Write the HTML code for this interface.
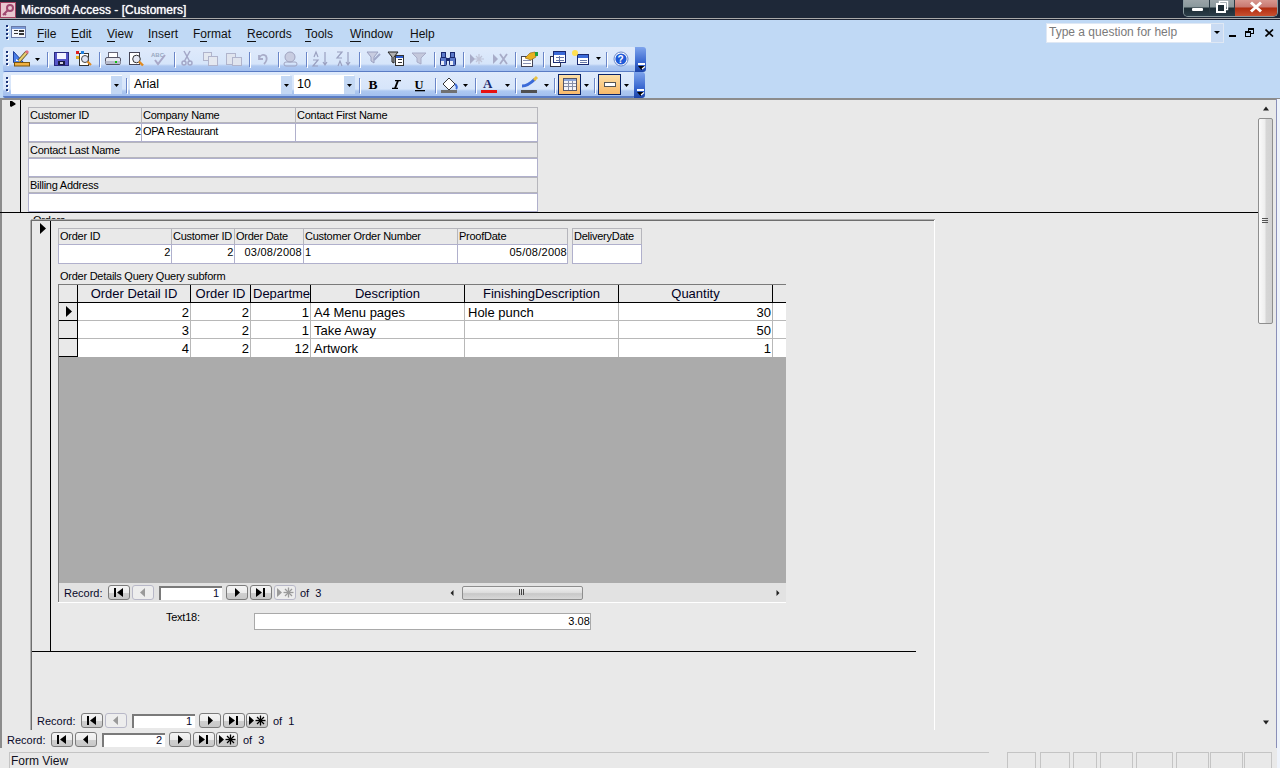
<!DOCTYPE html>
<html><head><meta charset="utf-8">
<style>
*{margin:0;padding:0;box-sizing:border-box}
html,body{width:1280px;height:768px;overflow:hidden}
body{position:relative;background:#e9e9e9;font-family:"Liberation Sans",sans-serif;color:#000}
.a{position:absolute}
.t{position:absolute;white-space:nowrap;line-height:1}
#title{left:0;top:0;width:1280px;height:18px;background:#1e2838}
#tline{left:0;top:18px;width:1280px;height:1px;background:#a9a9a9}
#tline2{left:0;top:19px;width:1280px;height:1px;background:#1c2230}
#menubar{left:0;top:20px;width:1280px;height:79px;background:#c0d9f5}
.menu{font-size:12px;color:#101010;top:28px}
.menu u{text-decoration:none;border-bottom:1px solid #101010}
.tb{background:linear-gradient(#dfeafb 0px,#d6e5fa 17px,#aec8f0 19px,#a2bfee 24px,#5a7cc4 24px);border-radius:3px 3px 2px 2px}
.cap{background:linear-gradient(#7ea4ec,#3a68d0 60%,#1c44a8);border-radius:0 3px 3px 0}
#mdi{left:0;top:99px;width:1280px;height:653px;background:#e9e9e9}
.lbl{font-size:11px;letter-spacing:-0.25px}
.ds{font-size:13px}
.hd{position:absolute;text-align:center;line-height:1;white-space:nowrap;color:#00001e}
.nv{font-size:11px;color:#08082a}
.nb{position:absolute;width:22px;height:15px;border:1px solid #7c7c7c;border-radius:3px}
.ni{position:absolute;width:63px;height:14px;background:#fff;border-top:2px solid #7a7a7a;border-left:2px solid #7a7a7a}
.fl{border:1px solid #b6b6bc}
.fv{border:1px solid #b0b0cc;background:#fff}
</style></head><body>
<!-- title bar -->
<div class="a" id="title"></div>
<div class="a" id="tline"></div>
<div class="a" id="tline2"></div>
<div class="a" style="left:2px;top:2px;width:14px;height:14px;background:#c89aa8;border:1px solid #7a3450"></div>
<div class="t" style="left:21px;top:4px;font-size:12px;color:#fff;text-shadow:0 0 1px #fff">Microsoft Access - [Customers]</div>
<div class="a" style="left:1183px;top:0;width:95px;height:17px;border:1px solid #8a9aa0;border-top:none;border-radius:0 0 5px 5px;background:#2a3a44"></div>
<div class="a" style="left:1184px;top:0;width:25px;height:16px;background:linear-gradient(#9aa4a8 0,#8a989c 7px,#1c2c34 8px,#2c3e4a 16px);border-radius:0 0 0 4px"></div>
<div class="a" style="left:1210px;top:0;width:24px;height:16px;background:linear-gradient(#9aa4a8 0,#8a989c 7px,#1c2c34 8px,#2c3e4a 16px)"></div>
<div class="a" style="left:1235px;top:0;width:42px;height:16px;background:linear-gradient(#d89890 0,#c87870 7px,#b02c10 8px,#c85030 16px);border-radius:0 0 4px 0"></div>
<div class="a" style="left:1192px;top:8px;width:11px;height:3px;background:#fff;border-radius:1px"></div>
<svg class="a" style="left:1214px;top:0" width="16" height="14"><rect x="5.5" y="1.5" width="8" height="8" fill="none" stroke="#fff" stroke-width="1.4"/><rect x="3" y="4" width="8" height="8" fill="#1c2c34" stroke="#fff" stroke-width="2"/><rect x="6" y="7" width="2" height="2" fill="#1c2c34"/></svg>
<svg class="a" style="left:1248px;top:1px" width="16" height="12"><path d="M3 1.5 L13 10.5 M13 1.5 L3 10.5" stroke="#fff" stroke-width="3"/></svg>
<!-- title icon -->
<svg class="a" style="left:0px;top:2px" width="16" height="16"><rect x="0.5" y="0.5" width="15" height="15" fill="#e8c8d0" stroke="#a04060"/><circle cx="10" cy="6" r="3" fill="none" stroke="#a04870" stroke-width="2"/><path d="M8 8 L3 13 M4 11 L6 13" stroke="#a04870" stroke-width="2"/></svg>
<!-- menubar + toolbars background -->
<div class="a" id="menubar"></div>
<svg class="a" style="left:0;top:20px" width="30" height="26"><g fill="#fff"><rect x="7" y="6" width="2" height="2"/><rect x="7" y="10" width="2" height="2"/><rect x="7" y="14" width="2" height="2"/><rect x="7" y="18" width="2" height="2"/></g><g fill="#1c3478"><rect x="6" y="5" width="2" height="2"/><rect x="6" y="9" width="2" height="2"/><rect x="6" y="13" width="2" height="2"/><rect x="6" y="17" width="2" height="2"/></g>
<rect x="11.5" y="6.5" width="14" height="11" fill="#f4f6fc" stroke="#6a7aa8"/><rect x="12" y="7" width="13" height="2" fill="#7a9ad8"/><g fill="#333"><rect x="14" y="10" width="4" height="1"/><rect x="14" y="13" width="4" height="1"/><rect x="19" y="10" width="5" height="2"/><rect x="19" y="13" width="5" height="2"/></g></svg>
<div class="t menu" style="left:37px"><u>F</u>ile</div>
<div class="t menu" style="left:71px"><u>E</u>dit</div>
<div class="t menu" style="left:107px"><u>V</u>iew</div>
<div class="t menu" style="left:148px"><u>I</u>nsert</div>
<div class="t menu" style="left:193px">F<u>o</u>rmat</div>
<div class="t menu" style="left:247px"><u>R</u>ecords</div>
<div class="t menu" style="left:305px"><u>T</u>ools</div>
<div class="t menu" style="left:350px"><u>W</u>indow</div>
<div class="t menu" style="left:410px"><u>H</u>elp</div>

<!-- help box -->
<div class="a" style="left:1046px;top:23px;width:178px;height:20px;background:#fff;border:1px solid #dfe8f4"></div>
<div class="a" style="left:1211px;top:24px;width:12px;height:18px;background:#c9dbf3"></div>
<div class="t" style="left:1049px;top:26px;font-size:12px;color:#7a7a7a">Type a question for help</div>

<!-- MDI buttons -->
<div class="a" style="left:1229px;top:35px;width:7px;height:2px;background:#000"></div>
<svg class="a" style="left:1245px;top:28px" width="9" height="9"><rect x="3.5" y="0.5" width="5" height="5" fill="none" stroke="#000"/><rect x="3" y="0" width="6" height="2" fill="#000"/><rect x="0.5" y="3.5" width="5" height="5" fill="#c0d9f5" stroke="#000"/><rect x="0" y="3" width="6" height="2" fill="#000"/></svg>
<svg class="a" style="left:1265px;top:29px" width="9" height="8"><path d="M0.5 0.5 L8 7.5 M8 0.5 L0.5 7.5" stroke="#000" stroke-width="1.7"/></svg>
<svg class="a" style="left:1214px;top:31px" width="7" height="4"><path d="M0 0 L6 0 L3 3 Z" fill="#000"/></svg>
<!-- toolbars -->
<div class="a tb" id="tb1" style="left:3px;top:47px;width:633px;height:25px"></div>
<div class="a cap" style="left:635px;top:47px;width:11px;height:25px"></div>
<div class="a tb" id="tb2" style="left:3px;top:72px;width:632px;height:26px"></div>
<div class="a cap" style="left:634px;top:72px;width:11px;height:26px"></div>
<div class="a" style="left:11px;top:75px;width:111px;height:19px;background:#fff"></div>
<div class="a" style="left:130px;top:75px;width:160px;height:19px;background:#fff"></div>
<div class="t" style="left:134px;top:78px;font-size:12.5px">Arial</div>
<div class="a" style="left:294px;top:75px;width:60px;height:19px;background:#fff"></div>
<div class="t" style="left:297px;top:78px;font-size:12.5px">10</div>

<!--TB--><svg class="a" style="left:0;top:0" width="660" height="100">
<defs>
<linearGradient id="og" x1="0" y1="0" x2="0" y2="1"><stop offset="0" stop-color="#fde0a8"/><stop offset="1" stop-color="#f8b868"/></linearGradient>
<linearGradient id="gb" x1="0" y1="0" x2="0" y2="1"><stop offset="0" stop-color="#6f9ff0"/><stop offset="1" stop-color="#1f48b8"/></linearGradient>
</defs>
<!-- grips -->
<g fill="#fff"><rect x="7" y="52" width="2" height="2"/><rect x="7" y="56" width="2" height="2"/><rect x="7" y="60" width="2" height="2"/><rect x="7" y="64" width="2" height="2"/>
<rect x="7" y="78" width="2" height="2"/><rect x="7" y="82" width="2" height="2"/><rect x="7" y="86" width="2" height="2"/><rect x="7" y="90" width="2" height="2"/></g>
<g fill="#1c3478"><rect x="6" y="51" width="2" height="2"/><rect x="6" y="55" width="2" height="2"/><rect x="6" y="59" width="2" height="2"/><rect x="6" y="63" width="2" height="2"/>
<rect x="6" y="77" width="2" height="2"/><rect x="6" y="81" width="2" height="2"/><rect x="6" y="85" width="2" height="2"/><rect x="6" y="89" width="2" height="2"/></g>
<!-- separators tb1 -->
<g fill="#6a86c8">
<rect x="47" y="52" width="1" height="15"/><rect x="99" y="52" width="1" height="15"/><rect x="174" y="52" width="1" height="15"/>
<rect x="249" y="52" width="1" height="15"/><rect x="278" y="52" width="1" height="15"/><rect x="306" y="52" width="1" height="15"/>
<rect x="359" y="52" width="1" height="15"/><rect x="434" y="52" width="1" height="15"/><rect x="463" y="52" width="1" height="15"/>
<rect x="515" y="52" width="1" height="15"/><rect x="543" y="52" width="1" height="15"/><rect x="606" y="52" width="1" height="15"/>
<rect x="126" y="78" width="1" height="15"/><rect x="359" y="78" width="1" height="15"/><rect x="435" y="78" width="1" height="15"/>
<rect x="475" y="78" width="1" height="15"/><rect x="515" y="78" width="1" height="15"/><rect x="554" y="78" width="1" height="15"/><rect x="594" y="78" width="1" height="15"/>
</g>
<g fill="#fff">
<rect x="48" y="53" width="1" height="15"/><rect x="100" y="53" width="1" height="15"/><rect x="175" y="53" width="1" height="15"/>
<rect x="250" y="53" width="1" height="15"/><rect x="279" y="53" width="1" height="15"/><rect x="307" y="53" width="1" height="15"/>
<rect x="360" y="53" width="1" height="15"/><rect x="435" y="53" width="1" height="15"/><rect x="464" y="53" width="1" height="15"/>
<rect x="516" y="53" width="1" height="15"/><rect x="544" y="53" width="1" height="15"/><rect x="607" y="53" width="1" height="15"/>
<rect x="127" y="79" width="1" height="15"/><rect x="360" y="79" width="1" height="15"/><rect x="436" y="79" width="1" height="15"/>
<rect x="476" y="79" width="1" height="15"/><rect x="516" y="79" width="1" height="15"/><rect x="555" y="79" width="1" height="15"/><rect x="595" y="79" width="1" height="15"/>
</g>
<!-- design view -->
<path d="M13.5 51.5 L13.5 62.5 L23.5 62.5 Z" fill="#4a7ee8" stroke="#1d3f9b"/>
<path d="M16 59 L16 61 L19 61 Z" fill="#fff"/>
<path d="M19 61 L27 52" stroke="#5a4a20" stroke-width="3.6"/>
<path d="M19 61 L27 52" stroke="#e8d070" stroke-width="2.2"/>
<path d="M26 53 L28 51" stroke="#e07080" stroke-width="3"/>
<rect x="14.5" y="62.5" width="15" height="3.5" fill="#f0b040" stroke="#7a5510"/>
<path d="M35 58 L40 58 L37.5 61 Z" fill="#000"/>
<!-- save -->
<rect x="54.5" y="52.5" width="14" height="13" fill="#5656c8" stroke="#2a2a80"/>
<rect x="57" y="53" width="9" height="6" fill="#f4f4ff"/>
<rect x="58" y="61" width="7" height="4" fill="#1a1a40"/>
<rect x="60" y="62" width="3" height="2" fill="#d0d0e0"/>
<!-- file search -->
<rect x="79.5" y="53.5" width="9" height="12" fill="#fff" stroke="#333"/>
<rect x="76" y="51" width="3" height="3" fill="#e02020"/><rect x="81" y="51" width="3" height="3" fill="#2080e0"/><rect x="76" y="56" width="3" height="3" fill="#e0b020"/>
<circle cx="85" cy="59" r="3.5" fill="#dfe4f4" stroke="#444"/>
<path d="M87.5 61.5 L91 65" stroke="#e08a20" stroke-width="2.2"/>
<!-- print -->
<rect x="108.5" y="52.5" width="9" height="5" fill="#fff" stroke="#667"/>
<rect x="105.5" y="57.5" width="15" height="7" rx="1.5" fill="#e6e8f0" stroke="#556"/>
<rect x="105.5" y="61" width="15" height="3" fill="#b8bccc"/>
<rect x="115" y="61" width="2" height="2" fill="#10c010"/>
<!-- print preview -->
<rect x="129.5" y="52.5" width="10" height="12" fill="#fff" stroke="#445"/>
<circle cx="136.5" cy="59" r="3.8" fill="#e4e8f4" stroke="#333"/>
<path d="M139 61.5 L143 65.5" stroke="#e08a20" stroke-width="2.4"/>
<!-- spelling (disabled) -->
<text x="151" y="57" font-family="Liberation Sans" font-size="6" font-weight="bold" fill="#98a8c0">ABC</text>
<path d="M155 60 L158 64 L165 55" stroke="#a8a8c8" stroke-width="2" fill="none"/>
<!-- cut disabled -->
<g stroke="#a4a8c8" stroke-width="1.5" fill="none"><path d="M184 51 L190 62"/><path d="M190 51 L184 62"/><circle cx="184" cy="63" r="2"/><circle cx="190" cy="63" r="2"/></g>
<!-- copy disabled -->
<g stroke="#b0b4cc" fill="#e4e8f0"><rect x="203.5" y="52.5" width="8" height="8"/><rect x="208.5" y="56.5" width="9" height="9"/></g>
<!-- paste disabled -->
<g stroke="#b0b4cc" fill="#e0e4ee"><rect x="226.5" y="53.5" width="9" height="11"/><rect x="232.5" y="57.5" width="9" height="8"/></g>
<!-- undo disabled -->
<path d="M259 55 L259 59 L263 59 M259 58 Q262 53 266 56 Q268 60 264 64" stroke="#a8acc8" stroke-width="1.8" fill="none"/>
<!-- office links disabled -->
<circle cx="290" cy="57" r="5" fill="#c8cce0" stroke="#a0a4c0"/><rect x="284" y="62" width="13" height="4" rx="2" fill="none" stroke="#a0a4c0"/>
<!-- sort asc/desc disabled -->
<g fill="none" stroke="#9aa0c0" stroke-width="1.2"><path d="M314 57 L316 52 L318 57 M313 60 L318 60 L313 66 L318 66"/><path d="M325 52 L325 65 M323 62 L325 65 L327 62"/>
<path d="M337 52 L342 52 L337 58 L342 58 M338 66 L340 61 L342 66"/><path d="M348 52 L348 65 M346 62 L348 65 L350 62"/></g>
<!-- filter by selection disabled -->
<path d="M367 52 L378 52 L374 57 L374 63 L371 61 L371 57 Z" fill="#c8cce0" stroke="#9aa0c0"/>
<path d="M374 60 L380 54" stroke="#a0a8c8" stroke-width="2"/>
<!-- filter by form -->
<path d="M388 52 L398 52 L394 57 L394 63 L392 62 L392 57 Z" fill="#b0b0b0" stroke="#222"/>
<rect x="395.5" y="55.5" width="8" height="10" fill="#fff" stroke="#333"/><rect x="396" y="56" width="7" height="2" fill="#2a5cd0"/>
<rect x="398" y="59" width="4" height="1" fill="#333"/><rect x="398" y="62" width="4" height="1" fill="#333"/>
<!-- apply filter disabled -->
<path d="M412 53 L426 53 L421 58 L421 64 L417 62 L417 58 Z" fill="#c4c8dc" stroke="#a8acc8"/>
<!-- binoculars -->
<g fill="#5a78c8" stroke="#1a2a70" stroke-width="1"><rect x="440.5" y="57.5" width="6" height="8" rx="1"/><rect x="449.5" y="57.5" width="6" height="8" rx="1"/><rect x="441.5" y="52.5" width="4" height="5"/><rect x="450.5" y="52.5" width="4" height="5"/></g><rect x="446" y="58" width="4" height="3" fill="#1a2a70"/>
<g fill="#e8ecf8"><rect x="441" y="61" width="3" height="4"/><rect x="450" y="61" width="3" height="4"/></g>
<!-- new / delete record disabled -->
<path d="M470 54 L470 64 L475 59 Z" fill="#a8acc8"/><g stroke="#c0c4d8" stroke-width="1.2"><path d="M479 54 L479 64 M474 59 L484 59 M476 56 L482 62 M482 56 L476 62"/></g>
<path d="M493 54 L493 64 L498 59 Z" fill="#a8acc8"/><g stroke="#a8acc8" stroke-width="1.8"><path d="M500 54 L507 64 M507 54 L500 64"/></g>
<!-- properties -->
<rect x="521.5" y="56.5" width="11" height="10" fill="#fff" stroke="#445"/><rect x="523" y="60" width="8" height="1" fill="#8890b0"/><rect x="523" y="63" width="8" height="1" fill="#8890b0"/>
<path d="M525 58 L530 53 L535 52 L536 57 L531 60 Z" fill="#e8b020" stroke="#8a6010" stroke-width="0.6"/>
<rect x="535" y="52" width="3" height="4" fill="#20a040"/>
<!-- database window -->
<rect x="550.5" y="56.5" width="10" height="10" fill="#fff" stroke="#334"/>
<rect x="553.5" y="51.5" width="12" height="11" fill="#fff" stroke="#1a2a70"/><rect x="554" y="52" width="11" height="3" fill="#3a6ad8"/>
<g fill="#6878a8"><rect x="556" y="57" width="8" height="1"/><rect x="556" y="60" width="8" height="1"/><rect x="559" y="56" width="1" height="6"/></g>
<!-- new object -->
<rect x="577.5" y="54.5" width="11" height="10" fill="#fff" stroke="#1a2a70"/><rect x="578" y="55" width="10" height="3" fill="#3a6ad8"/>
<g fill="#6878a8"><rect x="580" y="60" width="7" height="1"/><rect x="580" y="62" width="7" height="1"/></g>
<circle cx="575" cy="53" r="3" fill="#ffe050"/>
<path d="M596 57 L601 57 L598.5 60 Z" fill="#000"/>
<!-- help -->
<circle cx="621" cy="59" r="7" fill="#fff" stroke="#6a88c8"/>
<circle cx="621" cy="59" r="5.6" fill="#1f5ad8"/>
<text x="617.5" y="63" font-family="Liberation Sans" font-size="10" font-weight="bold" fill="#fff">?</text>
<!-- end caps -->
<rect x="638" y="63" width="7" height="2" fill="#fff"/><path d="M638 66 L645 66 L641.5 70 Z" fill="#000"/><path d="M642 69 L645 66.5" stroke="#fff" stroke-width="1.2"/>
<rect x="637" y="89" width="7" height="2" fill="#fff"/><path d="M637 92 L644 92 L640.5 96 Z" fill="#000"/><path d="M641 95 L644 92.5" stroke="#fff" stroke-width="1.2"/>

<!-- toolbar 2 -->
<rect x="111" y="76" width="11" height="18" fill="#c4d8f4"/>
<path d="M114 84 L119 84 L116.5 87 Z" fill="#000"/>
<rect x="281" y="76" width="11" height="18" fill="#c4d8f4"/>
<path d="M284 84 L289 84 L286.5 87 Z" fill="#000"/>
<rect x="344" y="76" width="11" height="18" fill="#c4d8f4"/>
<path d="M347 84 L352 84 L349.5 87 Z" fill="#000"/>
<!-- B I U -->
<text x="368.5" y="89" font-family="Liberation Serif" font-size="13.5" font-weight="bold" fill="#000">B</text>
<path d="M395 80.6 L401 80.6 M392 88.4 L398 88.4" stroke="#000" stroke-width="1.2" fill="none"/>
<path d="M398 80.5 L395 88.5" stroke="#000" stroke-width="1.9"/>
<text x="414.5" y="89" font-family="Liberation Serif" font-size="12.5" font-weight="bold" fill="#000">U</text>
<rect x="415" y="90" width="10" height="1.3" fill="#000"/>
<!-- fill color -->
<path d="M443 84 L449 78 L455 84 L449 90 Z" fill="#fff" stroke="#333"/>
<path d="M455 84 Q458 87 456 89" stroke="#3a6ad8" stroke-width="2" fill="none"/>
<rect x="441" y="90" width="16" height="3" fill="#707070"/>
<path d="M463 84 L468 84 L465.5 87 Z" fill="#000"/>
<!-- font color -->
<text x="483" y="88" font-family="Liberation Serif" font-size="13" font-weight="bold" fill="#1a2a70">A</text>
<rect x="481" y="90" width="16" height="3" fill="#e81010"/>
<path d="M505 84 L510 84 L507.5 87 Z" fill="#000"/>
<!-- line color -->
<path d="M522 86 Q528 86 535 79" stroke="#3a6ad8" stroke-width="3" fill="none"/>
<path d="M534 80 L537 77" stroke="#e8c040" stroke-width="3"/>
<rect x="521" y="90" width="16" height="3" fill="#505050"/>
<path d="M544 84 L549 84 L546.5 87 Z" fill="#000"/>
<!-- special effect (highlighted) -->
<rect x="558.5" y="74.5" width="22" height="20" fill="url(#og)" stroke="#0a246a"/>
<rect x="563.5" y="78.5" width="13" height="12" fill="#f4f4f8" stroke="#556"/>
<rect x="564" y="79" width="12" height="2" fill="#8aa4d8"/>
<g fill="#8890a8"><rect x="564" y="83" width="12" height="1"/><rect x="564" y="86" width="12" height="1"/><rect x="568" y="81" width="1" height="9"/><rect x="572" y="81" width="1" height="9"/></g>
<path d="M584 84 L589 84 L586.5 87 Z" fill="#000"/>
<!-- border (highlighted) -->
<rect x="598.5" y="74.5" width="22" height="20" fill="url(#og)" stroke="#0a246a"/>
<rect x="604.5" y="82.5" width="11" height="4" fill="#fff" stroke="#555"/>
<path d="M624 84 L629 84 L626.5 87 Z" fill="#000"/>
</svg>
<!--/TB-->
<!-- MDI area -->
<div class="a" id="mdi"></div>

<!-- MDI child border -->
<div class="a" style="left:0;top:98px;width:1280px;height:2px;background:#8c8c8c"></div>
<div class="a" style="left:0;top:100px;width:2px;height:648px;background:#8c8c8c"></div>
<div class="a" style="left:1276px;top:99px;width:1px;height:649px;background:#8a8fb8"></div>
<div class="a" style="left:1277px;top:99px;width:3px;height:669px;background:#eef3fb"></div>
<!-- record selector column (main form) -->
<div class="a" style="left:20px;top:100px;width:1px;height:112px;background:#000"></div>
<svg class="a" style="left:10px;top:101px" width="6" height="7"><path d="M0 0 L0 5 L1 6 L5.5 3.5 L5.5 2.5 L2 0 Z" fill="#000"/></svg>
<!-- header fields -->
<div class="a fl" style="left:28px;top:107px;width:114px;height:16px"></div>
<div class="a fl" style="left:141px;top:107px;width:155px;height:16px"></div>
<div class="a fl" style="left:295px;top:107px;width:243px;height:16px"></div>
<div class="a fv" style="left:28px;top:123px;width:114px;height:19px"></div>
<div class="a fv" style="left:141px;top:123px;width:155px;height:19px"></div>
<div class="a fv" style="left:295px;top:123px;width:243px;height:19px"></div>
<div class="a fl" style="left:28px;top:142px;width:510px;height:16px"></div>
<div class="a fv" style="left:28px;top:158px;width:510px;height:19px"></div>
<div class="a fl" style="left:28px;top:177px;width:510px;height:16px"></div>
<div class="a fv" style="left:28px;top:193px;width:510px;height:19px"></div>
<div class="t lbl" style="left:30px;top:109.5px">Customer ID</div>
<div class="t lbl" style="left:143px;top:109.5px">Company Name</div>
<div class="t lbl" style="left:297px;top:109.5px">Contact First Name</div>
<div class="t lbl" style="left:135px;top:125.5px">2</div>
<div class="t lbl" style="left:143px;top:125.5px">OPA Restaurant</div>
<div class="t lbl" style="left:30px;top:144.5px">Contact Last Name</div>
<div class="t lbl" style="left:30px;top:179.5px">Billing Address</div>
<!-- section divider -->
<div class="a" style="left:0;top:212px;width:1258px;height:1px;background:#000"></div>
<!-- Orders label (clipped) -->
<div class="a" style="left:33px;top:213px;width:40px;height:6px;overflow:hidden"><div class="t lbl" style="left:0;top:1.5px">Orders</div></div>

<!-- Orders subform -->
<div class="a" style="left:31px;top:220px;width:904px;height:1px;background:#6e6e6e"></div>
<div class="a" style="left:31px;top:219px;width:904px;height:1px;background:#b0b0b0"></div>
<div class="a" style="left:31px;top:220px;width:1px;height:510px;background:#6e6e6e"></div>
<div class="a" style="left:30px;top:220px;width:1px;height:510px;background:#b0b0b0"></div>
<div class="a" style="left:934px;top:220px;width:1px;height:510px;background:#ffffff"></div>
<div class="a" style="left:50px;top:221px;width:1px;height:430px;background:#000"></div>
<div class="a" style="left:32px;top:651px;width:884px;height:1px;background:#000"></div>
<svg class="a" style="left:40px;top:223px" width="8" height="12"><path d="M0 0 L6 5.5 L0 11 Z" fill="#000"/></svg>

<!-- Orders fields -->
<div class="a fl" style="left:58px;top:228px;width:114px;height:17px"></div>
<div class="a fl" style="left:171px;top:228px;width:64px;height:17px"></div>
<div class="a fl" style="left:234px;top:228px;width:70px;height:17px"></div>
<div class="a fl" style="left:303px;top:228px;width:155px;height:17px"></div>
<div class="a fl" style="left:457px;top:228px;width:111px;height:17px"></div>
<div class="a fl" style="left:572px;top:228px;width:70px;height:17px"></div>
<div class="a fv" style="left:58px;top:244px;width:114px;height:20px"></div>
<div class="a fv" style="left:171px;top:244px;width:64px;height:20px"></div>
<div class="a fv" style="left:234px;top:244px;width:70px;height:20px"></div>
<div class="a fv" style="left:303px;top:244px;width:155px;height:20px"></div>
<div class="a fv" style="left:457px;top:244px;width:111px;height:20px"></div>
<div class="a fv" style="left:572px;top:244px;width:70px;height:20px"></div>
<div class="t lbl" style="left:60px;top:230.5px">Order ID</div>
<div class="t lbl" style="left:173px;top:230.5px">Customer ID</div>
<div class="t lbl" style="left:236px;top:230.5px">Order Date</div>
<div class="t lbl" style="left:305px;top:230.5px">Customer Order Number</div>
<div class="t lbl" style="left:459px;top:230.5px">ProofDate</div>
<div class="t lbl" style="left:574px;top:230.5px">DeliveryDate</div>
<div class="t lbl r" style="right:1110px;top:246.5px">2</div>
<div class="t lbl r" style="right:1047px;top:246.5px">2</div>
<div class="t lbl r" style="right:978px;top:246.5px;letter-spacing:0.25px">03/08/2008</div>
<div class="t lbl" style="left:305px;top:246.5px">1</div>
<div class="t lbl r" style="right:713px;top:246.5px;letter-spacing:0.25px">05/08/2008</div>
<div class="t lbl" style="left:60px;top:270.5px">Order Details Query Query subform</div>

<!-- datasheet -->
<div class="a" style="left:58px;top:284px;width:728px;height:318px;background:#ababab"></div>
<div class="a" style="left:58px;top:284px;width:728px;height:1px;background:#7a7a7a"></div>
<div class="a" style="left:58px;top:284px;width:1px;height:318px;background:#7a7a7a"></div>
<div class="a" style="left:59px;top:285px;width:727px;height:18px;background:#e9e9e9"></div>
<div class="a" style="left:59px;top:303px;width:18px;height:54px;background:#e9e9e9"></div>
<div class="a" style="left:78px;top:303px;width:708px;height:54px;background:#fff"></div>
<div class="a" style="left:59px;top:583px;width:727px;height:19px;background:#e2e2e2"></div>
<div class="a" style="left:58px;top:602px;width:728px;height:1px;background:#fff"></div>
<!-- grid lines -->
<div class="a" style="left:59px;top:302px;width:727px;height:1px;background:#000"></div>
<div class="a" style="left:59px;top:320px;width:18px;height:1px;background:#000"></div>
<div class="a" style="left:59px;top:338px;width:18px;height:1px;background:#000"></div>
<div class="a" style="left:59px;top:356px;width:18px;height:1px;background:#000"></div>
<div class="a" style="left:78px;top:320px;width:708px;height:1px;background:#b8b8b8"></div>
<div class="a" style="left:78px;top:338px;width:708px;height:1px;background:#b8b8b8"></div>
<div class="a" style="left:77px;top:285px;width:1px;height:72px;background:#000"></div>
<div class="a" style="left:190px;top:285px;width:1px;height:17px;background:#000"></div>
<div class="a" style="left:250px;top:285px;width:1px;height:17px;background:#000"></div>
<div class="a" style="left:310px;top:285px;width:1px;height:17px;background:#000"></div>
<div class="a" style="left:464px;top:285px;width:1px;height:17px;background:#000"></div>
<div class="a" style="left:618px;top:285px;width:1px;height:17px;background:#000"></div>
<div class="a" style="left:772px;top:285px;width:1px;height:17px;background:#000"></div>
<div class="a" style="left:190px;top:303px;width:1px;height:54px;background:#b8b8b8"></div>
<div class="a" style="left:250px;top:303px;width:1px;height:54px;background:#b8b8b8"></div>
<div class="a" style="left:310px;top:303px;width:1px;height:54px;background:#b8b8b8"></div>
<div class="a" style="left:464px;top:303px;width:1px;height:54px;background:#b8b8b8"></div>
<div class="a" style="left:618px;top:303px;width:1px;height:54px;background:#b8b8b8"></div>
<div class="a" style="left:772px;top:303px;width:1px;height:54px;background:#b8b8b8"></div>
<svg class="a" style="left:66px;top:306px" width="7" height="11"><path d="M0 0 L6 5.5 L0 11 Z" fill="#000"/></svg>
<div class="a ds hd" style="left:78px;top:286.5px;width:112px">Order Detail ID</div>
<div class="a ds hd" style="left:191px;top:286.5px;width:59px">Order ID</div>
<div class="a ds hd" style="left:251px;top:286.5px;width:59px;overflow:hidden;text-align:left;padding-left:2px">Departme</div>
<div class="a ds hd" style="left:311px;top:286.5px;width:153px">Description</div>
<div class="a ds hd" style="left:465px;top:286.5px;width:153px">FinishingDescription</div>
<div class="a ds hd" style="left:619px;top:286.5px;width:153px">Quantity</div>
<div class="t ds" style="right:1091px;top:306px">2</div>
<div class="t ds" style="right:1091px;top:324px">3</div>
<div class="t ds" style="right:1091px;top:342px">4</div>
<div class="t ds" style="right:1031px;top:306px">2</div>
<div class="t ds" style="right:1031px;top:324px">2</div>
<div class="t ds" style="right:1031px;top:342px">2</div>
<div class="t ds" style="right:971px;top:306px">1</div>
<div class="t ds" style="right:971px;top:324px">1</div>
<div class="t ds" style="right:971px;top:342px">12</div>
<div class="t ds" style="left:314px;top:306px">A4 Menu pages</div>
<div class="t ds" style="left:314px;top:324px">Take Away</div>
<div class="t ds" style="left:314px;top:342px">Artwork</div>
<div class="t ds" style="left:468px;top:306px">Hole punch</div>
<div class="t ds" style="right:509px;top:306px">30</div>
<div class="t ds" style="right:509px;top:324px">50</div>
<div class="t ds" style="right:509px;top:342px">1</div>

<!-- text18 -->
<div class="t lbl" style="left:166px;top:611.5px">Text18:</div>
<div class="a" style="left:254px;top:613px;width:337px;height:17px;background:#fff;border:1px solid #a9a9a9"></div>
<div class="t lbl" style="right:690px;top:615.5px;letter-spacing:0.1px">3.08</div>
<!-- hscroll -->
<svg class="a" style="left:449px;top:589px" width="6" height="8"><path d="M4.5 1 L4.5 7 L1.5 4 Z" fill="#222"/></svg>
<div class="a" style="left:462px;top:586px;width:121px;height:14px;border:1px solid #8e8e8e;border-radius:2px;background:linear-gradient(#f0f0f0,#dcdcdc 50%,#c8c8c8 55%,#d8d8d8)"></div>
<div class="a" style="left:519px;top:589px;width:1px;height:6px;background:#444"></div>
<div class="a" style="left:521px;top:589px;width:1px;height:6px;background:#444"></div>
<div class="a" style="left:523px;top:589px;width:1px;height:6px;background:#444"></div>
<svg class="a" style="left:775px;top:589px" width="6" height="8"><path d="M1.5 1 L1.5 7 L4.5 4 Z" fill="#222"/></svg>
<!-- vscroll -->
<svg class="a" style="left:1263px;top:106px" width="7" height="5"><path d="M0 4.5 L6 4.5 L3 0.5 Z" fill="#222"/></svg>
<div class="a" style="left:1258px;top:118px;width:15px;height:206px;border:1px solid #8e8e8e;border-radius:2px;background:linear-gradient(90deg,#fafafa,#eeeeee 45%,#d6d6d6 55%,#d2d2d2)"></div>
<div class="a" style="left:1262px;top:218px;width:6px;height:1px;background:#555"></div>
<div class="a" style="left:1262px;top:220px;width:6px;height:1px;background:#555"></div>
<div class="a" style="left:1262px;top:222px;width:6px;height:1px;background:#555"></div>
<svg class="a" style="left:1263px;top:720px" width="7" height="5"><path d="M0 0.5 L6 0.5 L3 4.5 Z" fill="#222"/></svg>
<!-- status bar -->
<div class="a" style="left:9px;top:752px;width:980px;height:1px;background:#c4c4c4"></div>
<div class="a" style="left:9px;top:752px;width:1px;height:16px;background:#c4c4c4"></div>
<div class="a" style="left:1007px;top:752px;width:29px;height:16px;border-top:1px solid #c4c4c4;border-left:1px solid #c4c4c4;border-right:1px solid #c4c4c4"></div>
<div class="a" style="left:1040px;top:752px;width:30px;height:16px;border-top:1px solid #c4c4c4;border-left:1px solid #c4c4c4;border-right:1px solid #c4c4c4"></div>
<div class="a" style="left:1073px;top:752px;width:24px;height:16px;border-top:1px solid #c4c4c4;border-left:1px solid #c4c4c4;border-right:1px solid #c4c4c4"></div>
<div class="a" style="left:1100px;top:752px;width:33px;height:16px;border-top:1px solid #c4c4c4;border-left:1px solid #c4c4c4;border-right:1px solid #c4c4c4"></div>
<div class="a" style="left:1136px;top:752px;width:37px;height:16px;border-top:1px solid #c4c4c4;border-left:1px solid #c4c4c4;border-right:1px solid #c4c4c4"></div>
<div class="a" style="left:1176px;top:752px;width:33px;height:16px;border-top:1px solid #c4c4c4;border-left:1px solid #c4c4c4;border-right:1px solid #c4c4c4"></div>
<div class="a" style="left:1210px;top:752px;width:33px;height:16px;border-top:1px solid #c4c4c4;border-left:1px solid #c4c4c4;border-right:1px solid #c4c4c4"></div>
<div class="a" style="left:1244px;top:752px;width:28px;height:16px;border-top:1px solid #c4c4c4;border-left:1px solid #c4c4c4;border-right:1px solid #c4c4c4"></div>
<div class="t" style="left:11px;top:755px;font-size:12px;color:#101020">Form View</div>
<!-- navs -->
<!--NAV--><div class="t nv" style="left:64px;top:588px">Record:</div><div class="a nb" style="left:108px;top:585px;border-color:#7c7c7c;background:linear-gradient(#f4f4f4 0%,#ececec 50%,#cfcfcf 55%,#c8c8c8 100%)"></div><svg class="a" style="left:108px;top:585px" width="22" height="15"><rect x="6" y="3" width="2" height="9" fill="#000"/><path d="M15 3 L15 12 L9 7.5 Z" fill="#000"/></svg><div class="a nb" style="left:132px;top:585px;border-color:#b8b8c8;background:#ededed"></div><svg class="a" style="left:132px;top:585px" width="22" height="15"><path d="M13 3 L13 12 L8 7.5 Z" fill="#9a9a9a"/></svg><div class="a ni" style="left:159px;top:586px"></div><div class="t nv" style="left:159px;width:60px;text-align:right;top:588px">1</div><div class="a nb" style="left:226px;top:585px;border-color:#7c7c7c;background:linear-gradient(#f4f4f4 0%,#ececec 50%,#cfcfcf 55%,#c8c8c8 100%)"></div><svg class="a" style="left:226px;top:585px" width="22" height="15"><path d="M9 3 L9 12 L14 7.5 Z" fill="#000"/></svg><div class="a nb" style="left:250px;top:585px;border-color:#7c7c7c;background:linear-gradient(#f4f4f4 0%,#ececec 50%,#cfcfcf 55%,#c8c8c8 100%)"></div><svg class="a" style="left:250px;top:585px" width="22" height="15"><path d="M6 3 L6 12 L12 7.5 Z" fill="#000"/><rect x="13" y="3" width="2" height="9" fill="#000"/></svg><div class="a nb" style="left:274px;top:585px;border-color:#b8b8c8;background:#ededed"></div><svg class="a" style="left:274px;top:585px" width="22" height="15"><path d="M3 3 L3 12 L8 7.5 Z" fill="#9a9a9a"/><g stroke="#9a9a9a" stroke-width="1.3"><line x1="14.5" y1="2.5" x2="14.5" y2="12.5"/><line x1="9.5" y1="7.5" x2="19.5" y2="7.5"/><line x1="11" y1="4" x2="18" y2="11"/><line x1="18" y1="4" x2="11" y2="11"/></g></svg><div class="t nv" style="left:300px;top:588px">of&nbsp;&nbsp;3</div>
<div class="t nv" style="left:37px;top:716px">Record:</div><div class="a nb" style="left:81px;top:713px;border-color:#7c7c7c;background:linear-gradient(#f4f4f4 0%,#ececec 50%,#cfcfcf 55%,#c8c8c8 100%)"></div><svg class="a" style="left:81px;top:713px" width="22" height="15"><rect x="6" y="3" width="2" height="9" fill="#000"/><path d="M15 3 L15 12 L9 7.5 Z" fill="#000"/></svg><div class="a nb" style="left:105px;top:713px;border-color:#b8b8c8;background:#ededed"></div><svg class="a" style="left:105px;top:713px" width="22" height="15"><path d="M13 3 L13 12 L8 7.5 Z" fill="#9a9a9a"/></svg><div class="a ni" style="left:132px;top:714px"></div><div class="t nv" style="left:132px;width:60px;text-align:right;top:716px">1</div><div class="a nb" style="left:199px;top:713px;border-color:#7c7c7c;background:linear-gradient(#f4f4f4 0%,#ececec 50%,#cfcfcf 55%,#c8c8c8 100%)"></div><svg class="a" style="left:199px;top:713px" width="22" height="15"><path d="M9 3 L9 12 L14 7.5 Z" fill="#000"/></svg><div class="a nb" style="left:223px;top:713px;border-color:#7c7c7c;background:linear-gradient(#f4f4f4 0%,#ececec 50%,#cfcfcf 55%,#c8c8c8 100%)"></div><svg class="a" style="left:223px;top:713px" width="22" height="15"><path d="M6 3 L6 12 L12 7.5 Z" fill="#000"/><rect x="13" y="3" width="2" height="9" fill="#000"/></svg><div class="a nb" style="left:246px;top:713px;border-color:#7c7c7c;background:linear-gradient(#f4f4f4 0%,#ececec 50%,#cfcfcf 55%,#c8c8c8 100%)"></div><svg class="a" style="left:246px;top:713px" width="22" height="15"><path d="M3 3 L3 12 L8 7.5 Z" fill="#000"/><g stroke="#000" stroke-width="1.3"><line x1="14.5" y1="2.5" x2="14.5" y2="12.5"/><line x1="9.5" y1="7.5" x2="19.5" y2="7.5"/><line x1="11" y1="4" x2="18" y2="11"/><line x1="18" y1="4" x2="11" y2="11"/></g></svg><div class="t nv" style="left:273px;top:716px">of&nbsp;&nbsp;1</div>
<div class="t nv" style="left:7px;top:735px">Record:</div><div class="a nb" style="left:51px;top:732px;border-color:#7c7c7c;background:linear-gradient(#f4f4f4 0%,#ececec 50%,#cfcfcf 55%,#c8c8c8 100%)"></div><svg class="a" style="left:51px;top:732px" width="22" height="15"><rect x="6" y="3" width="2" height="9" fill="#000"/><path d="M15 3 L15 12 L9 7.5 Z" fill="#000"/></svg><div class="a nb" style="left:75px;top:732px;border-color:#7c7c7c;background:linear-gradient(#f4f4f4 0%,#ececec 50%,#cfcfcf 55%,#c8c8c8 100%)"></div><svg class="a" style="left:75px;top:732px" width="22" height="15"><path d="M13 3 L13 12 L8 7.5 Z" fill="#000"/></svg><div class="a ni" style="left:102px;top:733px"></div><div class="t nv" style="left:102px;width:60px;text-align:right;top:735px">2</div><div class="a nb" style="left:169px;top:732px;border-color:#7c7c7c;background:linear-gradient(#f4f4f4 0%,#ececec 50%,#cfcfcf 55%,#c8c8c8 100%)"></div><svg class="a" style="left:169px;top:732px" width="22" height="15"><path d="M9 3 L9 12 L14 7.5 Z" fill="#000"/></svg><div class="a nb" style="left:193px;top:732px;border-color:#7c7c7c;background:linear-gradient(#f4f4f4 0%,#ececec 50%,#cfcfcf 55%,#c8c8c8 100%)"></div><svg class="a" style="left:193px;top:732px" width="22" height="15"><path d="M6 3 L6 12 L12 7.5 Z" fill="#000"/><rect x="13" y="3" width="2" height="9" fill="#000"/></svg><div class="a nb" style="left:216px;top:732px;border-color:#7c7c7c;background:linear-gradient(#f4f4f4 0%,#ececec 50%,#cfcfcf 55%,#c8c8c8 100%)"></div><svg class="a" style="left:216px;top:732px" width="22" height="15"><path d="M3 3 L3 12 L8 7.5 Z" fill="#000"/><g stroke="#000" stroke-width="1.3"><line x1="14.5" y1="2.5" x2="14.5" y2="12.5"/><line x1="9.5" y1="7.5" x2="19.5" y2="7.5"/><line x1="11" y1="4" x2="18" y2="11"/><line x1="18" y1="4" x2="11" y2="11"/></g></svg><div class="t nv" style="left:243px;top:735px">of&nbsp;&nbsp;3</div>
<!--/NAV-->
</body></html>
